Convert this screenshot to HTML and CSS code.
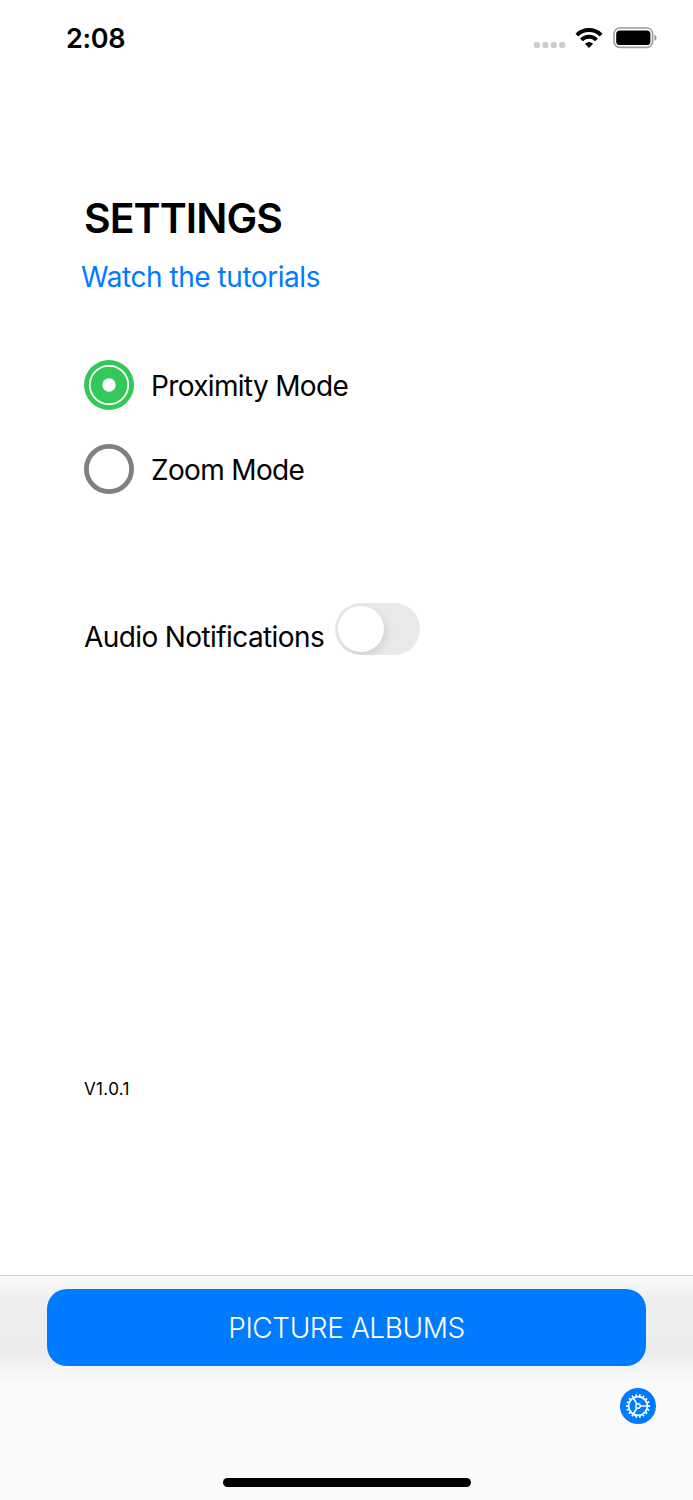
FILE: index.html
```
<!DOCTYPE html>
<html lang="en">
<head>
<meta charset="utf-8">
<title>Settings</title>
<link rel="stylesheet" href="styles.css">
</head>
<body>
<div class="screen">
  <header class="status">
    <span class="time">2:08</span>
    <div class="indicators">
      <svg class="cell" width="32" height="6" viewBox="0 0 32 6"><g fill="#ccc"><rect width="6" height="6" rx="2"/><rect x="8.4" width="6" height="6" rx="2"/><rect x="16.8" width="6" height="6" rx="2"/><rect x="25.2" width="6" height="6" rx="2"/></g></svg>
      <svg class="wifi" width="28" height="22" viewBox="0 0 28 22"><g fill="none" stroke="#000" stroke-width="4"><path d="M1.9 8.1A17.2 17.2 0 0 1 26.1 8.1"/><path d="M6.5 12.9A10.8 10.8 0 0 1 21.5 12.9"/></g><path d="M14 21L9.9 16.8Q14 13.2 18.1 16.8Z"/></svg>
      <svg class="battery" width="44" height="22" viewBox="0 0 44 22"><rect x="1" y="1" width="38.6" height="19.4" rx="5.8" fill="none" stroke="#9b9b9b" stroke-width="1.6"/><rect x="3.2" y="3.4" width="34.2" height="14.6" rx="3.6"/><path d="M41.4 7.4Q43.6 8.4 43.6 10.7T41.4 14Z" fill="#9b9b9b"/></svg>
    </div>
  </header>
  <main class="content">
    <h1 class="title">SETTINGS</h1>
    <a class="link">Watch the tutorials</a>
    <div class="modes">
      <div class="mode">
        <svg width="50" height="50" viewBox="0 0 50 50"><circle cx="25" cy="25" r="25" fill="#34c759"/><circle cx="25" cy="25" r="19.2" fill="none" stroke="#fff" stroke-width="1.8"/><circle cx="25" cy="25" r="6.7" fill="#fff"/></svg>
        <span class="label proximity">Proximity Mode</span>
      </div>
      <div class="mode">
        <svg width="50" height="50" viewBox="0 0 50 50"><circle cx="25" cy="25" r="22.6" fill="#fff" stroke="#808080" stroke-width="4.8"/></svg>
        <span class="label zoom">Zoom Mode</span>
      </div>
    </div>
    <div class="audio">
      <span class="label notify">Audio Notifications</span>
      <span class="switch"><span class="knob"></span></span>
    </div>
    <p class="version">V1.0.1</p>
  </main>
  <footer class="bar">
    <div class="band"><button class="albums">PICTURE ALBUMS</button></div>
    <svg class="gear" width="36" height="36" viewBox="0 0 36 36">
      <circle cx="18" cy="18" r="18" fill="#007aff"/>
      <g fill="none" stroke="#fff">
        <circle cx="18" cy="18" r="9.4" stroke-width="1.7"/>
        <circle cx="18" cy="18" r="10.9" stroke-width="2" pathLength="72" stroke-dasharray="1.8 2.2" stroke-dashoffset=".9"/>
        <circle cx="18" cy="18" r="2.2" stroke-width="1.4"/>
        <path d="M20.4 18H27.2M16.8 15.9L13.4 10M16.8 20.1L13.4 26" stroke-width="1.6"/>
      </g>
    </svg>
    <div class="home"></div>
  </footer>
</div>
</body>
</html>
```
FILE: styles.css
```
* { box-sizing: border-box; }
body { margin: 0; background: #fff; color: #000; font-family: Inter, "Liberation Sans", sans-serif; }
svg { display: block; flex: none; }
.screen { width: 693px; height: 1500px; display: flex; flex-direction: column; overflow: hidden; }
.status { height: 76px; padding: 0 36px 0 66px; display: flex; justify-content: space-between; align-items: center; }
.time { padding-top: 2px; font-size: 27px; font-weight: 600; line-height: 32px; letter-spacing: -0.35px; }
.indicators { display: flex; align-items: center; }
.cell { margin: 13px 9.5px 0 0; }
.wifi { margin-right: 10px; }
.content { flex: 1; padding: 116px 84px 0; display: flex; flex-direction: column; align-items: flex-start; }
.title { margin: 0; font-size: 41px; line-height: 52px; font-weight: 600; letter-spacing: -0.95px; white-space: nowrap; }
.link { margin: 14px 0 0 -3px; font-size: 28px; line-height: 38px; color: #007aff; letter-spacing: -0.45px; }
.modes { margin-top: 64px; display: grid; gap: 34px; }
.mode { display: flex; align-items: center; gap: 17px; height: 50px; }
.label { font-size: 28px; line-height: 36px; white-space: nowrap; }
.proximity, .zoom { padding-top: 2px; letter-spacing: -0.66px; }
.audio { margin-top: 108.5px; display: flex; align-items: flex-start; }
.notify { width: 251px; margin-top: 16.5px; letter-spacing: -0.6px; }
.switch { width: 85px; height: 52px; padding: 3px; border-radius: 26px; background: #e9e9eb; overflow: hidden; }
.knob { display: block; width: 46px; height: 46px; border-radius: 50%; background: #fff; box-shadow: 2px 4px 9px rgba(0,0,0,.1); }
.version { margin: 421.5px 0 0; font-size: 17px; line-height: 24px; letter-spacing: 0.35px; }
.bar { height: 225px; background: #fafafa; border-top: 1px solid #d2d2d2; display: flex; flex-direction: column; }
.band { padding: 13px 47px 22px; background: linear-gradient(#fafafa 0, #f7f7f7 7px, #efefef 22px, #ececec 78px, #f3f3f3 90px, #fafafa 108px); }
.albums { display: block; width: 599px; height: 77px; padding: 2px 0 0; border: 0; border-radius: 20px; background: #007aff; color: #fff; font: 300 28px/75px Inter, "Liberation Sans", sans-serif; letter-spacing: -0.42px; }
.gear { align-self: flex-end; margin: 0 37px 0 0; }
.home { width: 248px; height: 9px; border-radius: 5px; background: #000; margin: 54px auto 0; }
```
